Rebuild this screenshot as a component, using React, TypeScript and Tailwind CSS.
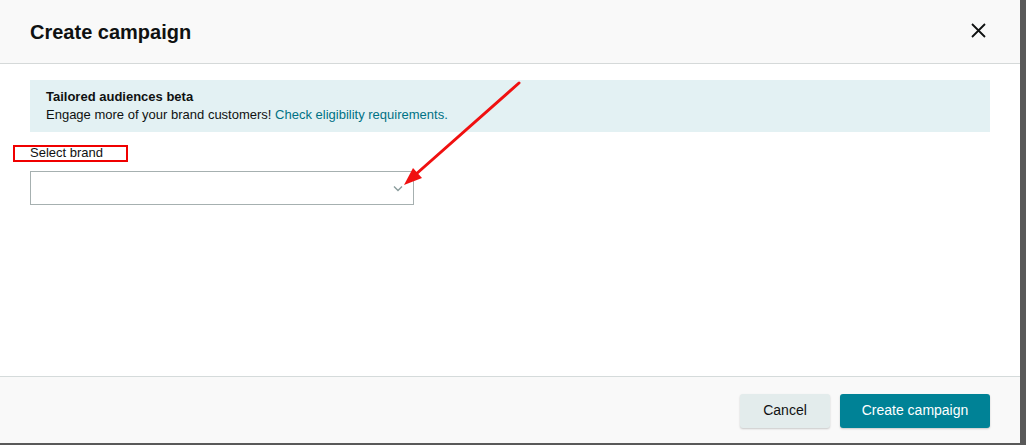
import React from 'react'

function CloseIcon() {
  return (
    <svg width="15" height="15" viewBox="0 0 15 15" className="text-[#0f1111]">
      <path d="M1 1 L14 14 M14 1 L1 14" stroke="currentColor" strokeWidth="1.8" fill="none" />
    </svg>
  )
}

function Chevron() {
  return (
    <svg width="10" height="7" viewBox="0 0 10 7">
      <polyline points="1,1.5 5,5.5 9,1.5" stroke="#8a9c9c" strokeWidth="1.4" fill="none" />
    </svg>
  )
}

function RedArrow() {
  // annotation arrow drawn over the dialog
  return (
    <svg className="pointer-events-none absolute left-0 top-0" width="1026" height="445">
      <line x1="519" y1="83" x2="415" y2="175" stroke="#f01010" strokeWidth="3" strokeLinecap="round" />
      <polygon points="404,185 413,168 422,178" fill="#f01010" />
    </svg>
  )
}

export default function App() {
  return (
    <div
      className="relative flex h-[445px] w-[1026px] bg-[#595959] text-[#0f1111]"
      style={{ fontFamily: '"Liberation Sans", Arial, sans-serif' }}
    >
      <div className="flex h-[443px] w-[1020px] flex-col bg-white">
        <div className="flex h-[64px] items-center justify-between border-b border-[#d5d9d9] bg-[#f9f9f9] pl-[30px] pr-[34px]">
          <h1 className="text-[20px] font-bold text-[#0f1111]">Create campaign</h1>
          <button type="button" className="mt-[-3px]">
            <CloseIcon />
          </button>
        </div>

        <div className="flex-1 px-[30px] pt-[16px]">
          <div className="bg-[#e3f1f3] px-[16px] py-[8px] text-[13px] leading-[18px]">
            <p className="font-bold">Tailored audiences beta</p>
            <p>
              Engage more of your brand customers!{' '}
              <a className="text-[#007185]">Check eligibility requirements.</a>
            </p>
          </div>

          <div className="relative mt-[13px] text-[13px] leading-[16px]">
            <span>Select brand</span>
            <span className="absolute left-[-17px] top-0 h-[17px] w-[115px] border-2 border-[#f00000]" />
          </div>

          <div className="mt-[10px] flex h-[34px] w-[384px] items-center justify-end border border-[#a6b0b0] pr-[10px]">
            <Chevron />
          </div>
        </div>

        <div className="flex h-[67px] items-center justify-end gap-[10px] border-t border-[#d5dbdb] bg-[#f9f9f9] pr-[30px] pt-[1px]">
          <button
            type="button"
            className="h-[34px] w-[90px] rounded-[3px] bg-[#e3ecec] text-[14px] text-[#0f1111] shadow-[0_1px_2px_rgba(0,0,0,0.2)]"
          >
            Cancel
          </button>
          <button
            type="button"
            className="h-[34px] w-[150px] rounded-[3px] bg-[#008296] text-[14px] text-white shadow-[0_1px_2px_rgba(0,0,0,0.2)]"
          >
            Create campaign
          </button>
        </div>
      </div>
      <RedArrow />
    </div>
  )
}
